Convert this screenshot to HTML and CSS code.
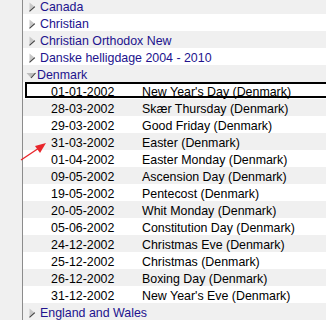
FILE: index.html
```html
<!DOCTYPE html>
<html lang="en">
<head>
  <meta charset="UTF-8">
  <title>Holidays</title>
  <link rel="stylesheet" href="styles.css">
</head>
<body>

<div class="tree">
  <div class="gutter"></div>
  <div class="rows">
    <div class="row group">
      <svg class="tri" width="7" height="10" viewBox="0 0 7 10"><polygon points="0.5,0.5 6,5 0.5,9.5" fill="#c8c8c8"/><line x1="0.5" y1="9.3" x2="5.8" y2="4.6" stroke="#404040" stroke-width="1.1"/></svg>
      <span>Canada</span>
    </div>
    <div class="row group">
      <svg class="tri" width="7" height="10" viewBox="0 0 7 10"><polygon points="0.5,0.5 6,5 0.5,9.5" fill="#c8c8c8"/><line x1="0.5" y1="9.3" x2="5.8" y2="4.6" stroke="#404040" stroke-width="1.1"/></svg>
      <span>Christian</span>
    </div>
    <div class="row group">
      <svg class="tri" width="7" height="10" viewBox="0 0 7 10"><polygon points="0.5,0.5 6,5 0.5,9.5" fill="#c8c8c8"/><line x1="0.5" y1="9.3" x2="5.8" y2="4.6" stroke="#404040" stroke-width="1.1"/></svg>
      <span>Christian Orthodox New</span>
    </div>
    <div class="row group">
      <svg class="tri" width="7" height="10" viewBox="0 0 7 10"><polygon points="0.5,0.5 6,5 0.5,9.5" fill="#c8c8c8"/><line x1="0.5" y1="9.3" x2="5.8" y2="4.6" stroke="#404040" stroke-width="1.1"/></svg>
      <span>Danske helligdage 2004 - 2010</span>
    </div>
    <div class="row group">
      <svg class="tri open" width="10" height="10" viewBox="0 0 10 10"><polygon points="0.5,3 9.5,3 5,8" fill="#bcbcbc"/><line x1="5" y1="8" x2="9.5" y2="3" stroke="#404040" stroke-width="1.1"/></svg>
      <span>Denmark</span>
    </div>

    <div class="row item selected"><div class="focus"></div><span class="date">01-01-2002</span><span>New Year's Day (Denmark)</span></div>
    <div class="row item"><span class="date">28-03-2002</span><span>Skær Thursday (Denmark)</span></div>
    <div class="row item"><span class="date">29-03-2002</span><span>Good Friday (Denmark)</span></div>
    <div class="row item"><span class="date">31-03-2002</span><span>Easter (Denmark)</span></div>
    <div class="row item"><span class="date">01-04-2002</span><span>Easter Monday (Denmark)</span></div>
    <div class="row item"><span class="date">09-05-2002</span><span>Ascension Day (Denmark)</span></div>
    <div class="row item"><span class="date">19-05-2002</span><span>Pentecost (Denmark)</span></div>
    <div class="row item"><span class="date">20-05-2002</span><span>Whit Monday (Denmark)</span></div>
    <div class="row item"><span class="date">05-06-2002</span><span>Constitution Day (Denmark)</span></div>
    <div class="row item"><span class="date">24-12-2002</span><span>Christmas Eve (Denmark)</span></div>
    <div class="row item"><span class="date">25-12-2002</span><span>Christmas (Denmark)</span></div>
    <div class="row item"><span class="date">26-12-2002</span><span>Boxing Day (Denmark)</span></div>
    <div class="row item"><span class="date">31-12-2002</span><span>New Year's Eve (Denmark)</span></div>

    <div class="row group">
      <svg class="tri" width="7" height="10" viewBox="0 0 7 10"><polygon points="0.5,0.5 6,5 0.5,9.5" fill="#c8c8c8"/><line x1="0.5" y1="9.3" x2="5.8" y2="4.6" stroke="#404040" stroke-width="1.1"/></svg>
      <span>England and Wales</span>
    </div>
  </div>

  <!-- red pointer drawn over the list -->
  <svg class="pointer" width="34" height="24" viewBox="0 0 34 24">
    <line x1="2" y1="21" x2="20" y2="9" stroke="#e8262b" stroke-width="1.3"/>
    <polygon points="27,4 16,7 21,14" fill="#e8262b"/>
  </svg>
</div>

</body>
</html>
```

FILE: styles.css
```css
body { margin: 0; background-color: #f0f0f0; font-family: "Liberation Sans", Arial, sans-serif; font-size: 12.4px; overflow: hidden; }
.tree { display: flex; position: relative; height: 320px; overflow: hidden; }
.gutter { width: 22px; flex: none; background-color: #f0f0f0; border-right: 1px solid #8c8c8c; }
.rows { flex: 1; margin-top: -3px; }
.row { position: relative; display: flex; align-items: flex-start; height: 17px; line-height: 21px; white-space: nowrap; background-color: #ffffff; }
.row:nth-child(odd) { background-color: #f0f0f0; }
.group { color: #22138e; }
.group span { position: relative; }
.tri { flex: none; margin: 5px 4px 0 6px; width: 7px; }
.tri.open { width: 10px; margin: 5px 1px 0 3px; }
.item { color: #000000; padding-left: 28px; }
.date { width: 91px; flex: none; position: relative; }
.item span { position: relative; }
.focus { position: absolute; left: 2px; right: 0; top: 0; height: 16px; box-sizing: border-box; border: 2px solid #000000; border-right: none; }
.pointer { position: absolute; left: 19px; top: 139px; }
```
